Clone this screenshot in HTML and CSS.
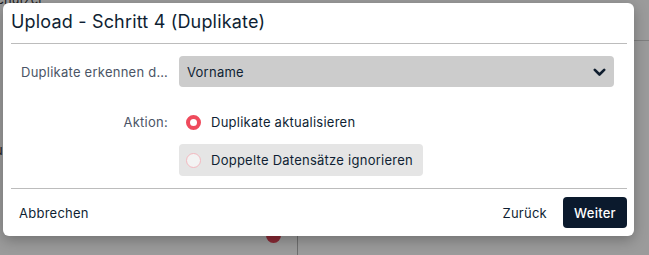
FILE: index.html
```html
<!DOCTYPE html>
<html lang="de">
<head>
<meta charset="utf-8">
<title>Upload - Schritt 4</title>
<link rel="stylesheet" href="styles.css">
</head>
<body>
<div class="page">
  <div class="bg-text">Benutzer</div>
  <div class="bg-line-h"></div>
  <div class="bg-line-v"></div>
  <div class="bg-dot"></div>
  <div class="bg-left">u</div>
</div>
<div class="modal">
  <div class="modal-header">
    <h1 class="modal-title">Upload - Schritt 4 (Duplikate)</h1>
  </div>
  <div class="modal-body">
    <div class="form-row">
      <label class="form-label">Duplikate erkennen durch:</label>
      <div class="select">
        <span>Vorname</span>
        <svg class="chevron" width="13" height="9" viewBox="0 0 13 9"><path d="M1.8 1.8 L6.5 6.5 L11.2 1.8" fill="none" stroke="#0f1d2e" stroke-width="2.6" stroke-linecap="round" stroke-linejoin="round"/></svg>
      </div>
    </div>
    <div class="form-row action-row">
      <label class="form-label">Aktion:</label>
      <div class="options">
        <div class="option"><span class="radio radio-checked"></span><span>Duplikate aktualisieren</span></div>
        <div class="option option-hover"><span class="radio"></span><span>Doppelte Datensätze ignorieren</span></div>
      </div>
    </div>
  </div>
  <div class="modal-footer">
    <button class="btn btn-link">Abbrechen</button>
    <div class="footer-right">
      <button class="btn btn-link">Zurück</button>
      <button class="btn btn-primary">Weiter</button>
    </div>
  </div>
</div>
</body>
</html>
```
FILE: styles.css
```css
* { box-sizing: border-box; }
html, body { margin: 0; padding: 0; }
body {
  width: 649px;
  height: 255px;
  overflow: hidden;
  background: #9b9b9b;
  font-family: Inter, "Noto Sans", sans-serif;
  position: relative;
}
.page { position: absolute; inset: 0; }
.bg-text {
  position: absolute; left: -12px; top: -9px;
  font-size: 13px; color: #222;
}
.bg-line-h {
  position: absolute; left: 634px; right: 0; top: 40px;
  height: 1px; background: #7f7f7f;
}
.bg-line-v {
  position: absolute; left: 297px; top: 236px; bottom: 0;
  width: 1px; background: #6e6e6e;
}
.bg-dot {
  position: absolute; left: 266px; top: 228px;
  width: 15px; height: 15px; border-radius: 50%;
  background: #8a2a35;
}
.bg-left {
  position: absolute; left: -5px; top: 142px;
  font-size: 13px; color: #222;
}

.modal {
  position: absolute;
  left: 3px; top: 3px;
  width: 631px;
  height: 233px;
  background: #fff;
  border-radius: 6px;
  padding: 0 7px 0 8px;
  box-shadow: 0 4px 14px rgba(0,0,0,0.28);
  display: flex;
  flex-direction: column;
}
.modal-header {
  height: 41px;
  display: flex;
  align-items: center;
  border-bottom: 1px solid #bcbcbc;
}
.modal-title {
  margin: 0;
  font-size: 18px;
  font-weight: 400;
  color: #0f1f33;
  letter-spacing: 0.18px;
  padding-bottom: 3px;
}
.modal-body {
  padding: 12px 13px 12px 0;
  display: flex;
  flex-direction: column;
  gap: 19px;
  border-bottom: 1px solid #bcbcbc;
}
.form-row {
  display: grid;
  grid-template-columns: 168px 1fr;
  align-items: center;
}
.action-row { align-items: start; }
.form-label {
  font-size: 13px;
  letter-spacing: 0.25px;
  color: #4b5566;
  text-align: right;
  padding-right: 11px;
  padding-left: 10px;
  white-space: nowrap;
  overflow: hidden;
  text-overflow: ellipsis;
}
.action-row .form-label { line-height: 32px; }
.select {
  height: 31px;
  background: #cccccc;
  border-radius: 4px;
  display: flex;
  align-items: center;
  justify-content: space-between;
  padding: 0 8px 0 8px;
  font-size: 13px;
  letter-spacing: 0.25px;
  color: #0f1f33;
}
.chevron { display: block; margin-top: 1px; }
.options {
  display: flex;
  flex-direction: column;
  align-items: flex-start;
  gap: 6px;
}
.option {
  height: 32px;
  display: flex;
  align-items: center;
  gap: 10px;
  padding: 0 10px 0 7px;
  border-radius: 4px;
  font-size: 13px;
  letter-spacing: 0.25px;
  color: #0f1f33;
}
.option-hover { background: #e5e5e5; }
.radio {
  width: 15px; height: 15px;
  border-radius: 50%;
  border: 1px solid #f3b8bf;
  background: #f3f3f3;
  flex: none;
}
.radio-checked {
  border: 4.5px solid #ef4a5c;
  background: #fff;
}
.modal-footer {
  flex: 1;
  display: flex;
  align-items: center;
  justify-content: space-between;
}
.footer-right { display: flex; align-items: center; gap: 8px; }
.btn {
  font-family: inherit;
  font-size: 13px;
  letter-spacing: 0.25px;
  border: none;
  border-radius: 4px;
  height: 31px;
  padding: 0 8px;
  cursor: pointer;
}
.btn-link { background: transparent; color: #0f1f33; }
.btn-primary {
  background: #0b1a2d;
  color: #fff;
  font-weight: 500;
  width: 64px;
}
```
